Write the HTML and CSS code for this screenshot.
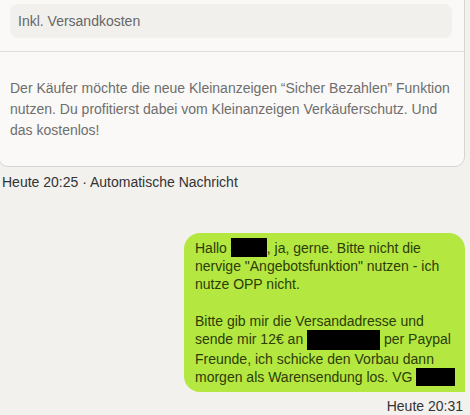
FILE: index.html
```html
<!DOCTYPE html>
<html lang="de">
<head>
<meta charset="utf-8">
<title>Nachrichten</title>
<link rel="stylesheet" href="styles.css">
</head>
<body>
<div class="thread">
  <div class="card">
    <div class="card-head">
      <div class="shipping">Inkl. Versandkosten</div>
    </div>
    <p class="card-body">Der Käufer möchte die neue Kleinanzeigen “Sicher Bezahlen” Funktion nutzen. Du profitierst dabei vom Kleinanzeigen Verkäuferschutz. Und das kostenlos!</p>
  </div>
  <div class="meta meta-left">Heute 20:25 · Automatische Nachricht</div>

  <div class="bubble">
    <p>Hallo <span class="redact r1"></span>, ja, gerne. Bitte nicht die nervige "Angebotsfunktion" nutzen - ich nutze OPP nicht.</p>
    <p>Bitte gib mir die Versandadresse und sende mir 12€ an <span class="redact r2"></span> per Paypal Freunde, ich schicke den Vorbau dann morgen als Warensendung los. <span class="keep">VG <span class="redact r3"></span></span></p>
  </div>
  <div class="meta meta-right">Heute 20:31</div>
</div>
</body>
</html>
```
FILE: styles.css
```css
html, body {
  margin: 0;
  padding: 0;
}
body {
  background: #f2f1ee;
  font-family: "Liberation Sans", Arial, sans-serif;
  font-size: 14px;
  color: #333333;
  overflow: hidden;
}
.thread {
  width: 465px;
  display: flex;
  flex-direction: column;
}
.card {
  margin: -12px 0 0 -2px;
  border: 1px solid #d6d4d0;
  border-radius: 10px;
  background: #faf9f7;
  padding-top: 15px;
}
.card-head {
  padding: 0 12px 13px 11px;
  border-bottom: 1px solid #e0dedb;
}
.shipping {
  background: #f1f0ec;
  border-radius: 8px;
  height: 34px;
  line-height: 34px;
  padding: 0 8px;
  color: #676767;
}
.card-body {
  margin: 0;
  padding: 26px 12px 25px 11px;
  line-height: 21px;
  color: #6e6e6e;
}
.meta {
  line-height: 16px;
  color: #333333;
}
.meta-left {
  margin-top: 7px;
  padding-left: 2px;
}
.bubble {
  align-self: flex-end;
  box-sizing: border-box;
  width: 281px;
  margin-top: 43px;
  padding: 6px 6px 6px 11px;
  background: #b5e741;
  border-radius: 16px 16px 0 16px;
  color: #2c3d06;
  line-height: 18.2px;
}
.bubble p {
  margin: 0;
}
.bubble p + p {
  margin-top: 18.2px;
}
.keep {
  white-space: nowrap;
}
.redact {
  display: inline-block;
  background: #000000;
  vertical-align: top;
}
.r1 {
  width: 36px;
  height: 19px;
  margin-top: -1px;
}
.r2 {
  width: 73px;
  height: 20px;
}
.r3 {
  width: 39px;
  height: 18px;
}
.meta-right {
  margin-top: 6px;
  text-align: right;
  padding-right: 2px;
}
```
